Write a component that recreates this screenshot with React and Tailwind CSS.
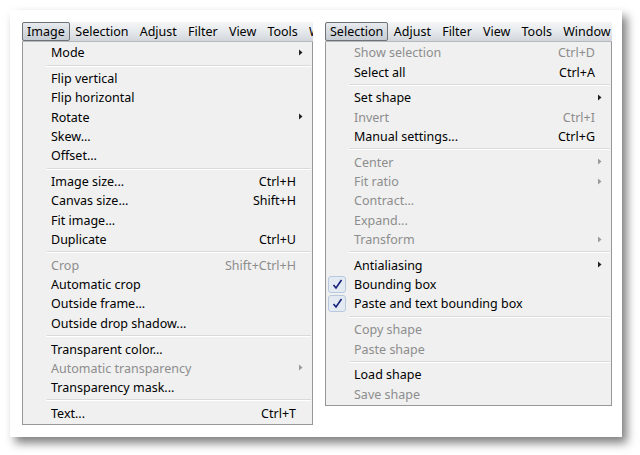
import React from 'react';

const imageMenu = [
    { label: 'Mode', sub: true },
    'sep',
    { label: 'Flip vertical' },
    { label: 'Flip horizontal' },
    { label: 'Rotate', sub: true },
    { label: 'Skew...' },
    { label: 'Offset...' },
    'sep',
    { label: 'Image size...', key: 'Ctrl+H' },
    { label: 'Canvas size...', key: 'Shift+H' },
    { label: 'Fit image...' },
    { label: 'Duplicate', key: 'Ctrl+U' },
    'sep',
    { label: 'Crop', key: 'Shift+Ctrl+H', off: true },
    { label: 'Automatic crop' },
    { label: 'Outside frame...' },
    { label: 'Outside drop shadow...' },
    'sep',
    { label: 'Transparent color...' },
    { label: 'Automatic transparency', sub: true, off: true },
    { label: 'Transparency mask...' },
    'sep',
    { label: 'Text...', key: 'Ctrl+T' },
];

const selectionMenu = [
    { label: 'Show selection', key: 'Ctrl+D', off: true },
    { label: 'Select all', key: 'Ctrl+A' },
    'sep',
    { label: 'Set shape', sub: true },
    { label: 'Invert', key: 'Ctrl+I', off: true },
    { label: 'Manual settings...', key: 'Ctrl+G' },
    'sep',
    { label: 'Center', sub: true, off: true },
    { label: 'Fit ratio', sub: true, off: true },
    { label: 'Contract...', off: true },
    { label: 'Expand...', off: true },
    { label: 'Transform', sub: true, off: true },
    'sep',
    { label: 'Antialiasing', sub: true },
    { label: 'Bounding box', checked: true },
    { label: 'Paste and text bounding box', checked: true },
    'sep',
    { label: 'Copy shape', off: true },
    { label: 'Paste shape', off: true },
    'sep',
    { label: 'Load shape' },
    { label: 'Save shape', off: true },
];

// little submenu triangle, sits over the row's right padding
const Arrow = ({ off }) => (
    <svg width="4" height="7" viewBox="0 0 4 7" className="absolute right-[9px] top-[6px]">
        <path d="M0 0.5 L3.5 3.5 L0 6.5 Z" fill={off ? '#9a9a9a' : '#222'} />
    </svg>
);

// checkmark tile drawn in the gutter
const Check = () => (
    <div className="absolute left-[2px] top-[1px] w-[18px] h-[17px] rounded-[3px] border border-[#b9c9dd] bg-[#e4eaf1] flex items-center justify-center">
        <svg width="11" height="11" viewBox="0 0 11 11">
            <path d="M1.5 6 L4 9 L9.5 1" fill="none" stroke="#14207a" strokeWidth="1.6" />
        </svg>
    </div>
);

const MenuBar = ({ items }) => (
    <div className="h-[20px] flex items-center whitespace-nowrap overflow-hidden bg-gradient-to-b from-[#f4f5f7] via-[#e6e9ec] to-[#d2d6db] border-b border-[#b5b9be]">
        {items.map((it, i) => (
            <div
                key={it}
                className={
                    i === 0
                        ? 'h-[19px] pt-[2px] px-[4px] flex items-center shrink-0 rounded-[2px] border border-[#6f7378] bg-gradient-to-b from-[#e7eaee] to-[#c6ccd3]'
                        : 'h-[19px] pt-[2px] px-[5.6px] flex items-center shrink-0'
                }
            >
                {it}
            </div>
        ))}
    </div>
);

const Separator = () => (
    <div className="h-[6.5px] flex flex-col justify-center pl-[23px] pr-[1px]">
        <div className="h-px bg-[#dadada] border-l border-[#ececec]" />
        <div className="h-px bg-white" />
    </div>
);

const Dropdown = ({ items }) => (
    <div className="bg-[#f0f0f0] border border-[#979797] border-t-0 py-[1px]">
        {items.map((it, i) =>
            it === 'sep' ? (
                <Separator key={i} />
            ) : (
                <div
                    key={i}
                    className={`relative h-[19.3px] flex items-center pt-[2px] pl-[28px] pr-[16px] ${it.off ? 'text-[#8d8d8d]' : 'text-black'}`}
                >
                    {it.checked && <Check />}
                    <span className="flex-1">{it.label}</span>
                    {it.key && <span>{it.key}</span>}
                    {it.sub && <Arrow off={it.off} />}
                </div>
            )
        )}
    </div>
);

export default function App() {
    return (
        <div className="w-[640px] h-[455px] bg-white overflow-hidden" style={{ fontFamily: '"Noto Sans", sans-serif' }}>
            <div className="ml-[10px] mt-[10px] w-[612px] h-[427px] bg-white shadow-[5px_6px_9px_rgba(0,0,0,0.5)] flex gap-[12px] pl-[12px] pt-[12px] text-[12.5px] leading-none">
                <div className="w-[291px]">
                    <MenuBar items={['Image', 'Selection', 'Adjust', 'Filter', 'View', 'Tools', 'Window']} />
                    <Dropdown items={imageMenu} />
                </div>
                <div className="w-[287px]">
                    <MenuBar items={['Selection', 'Adjust', 'Filter', 'View', 'Tools', 'Window']} />
                    <Dropdown items={selectionMenu} />
                </div>
            </div>
        </div>
    );
}
